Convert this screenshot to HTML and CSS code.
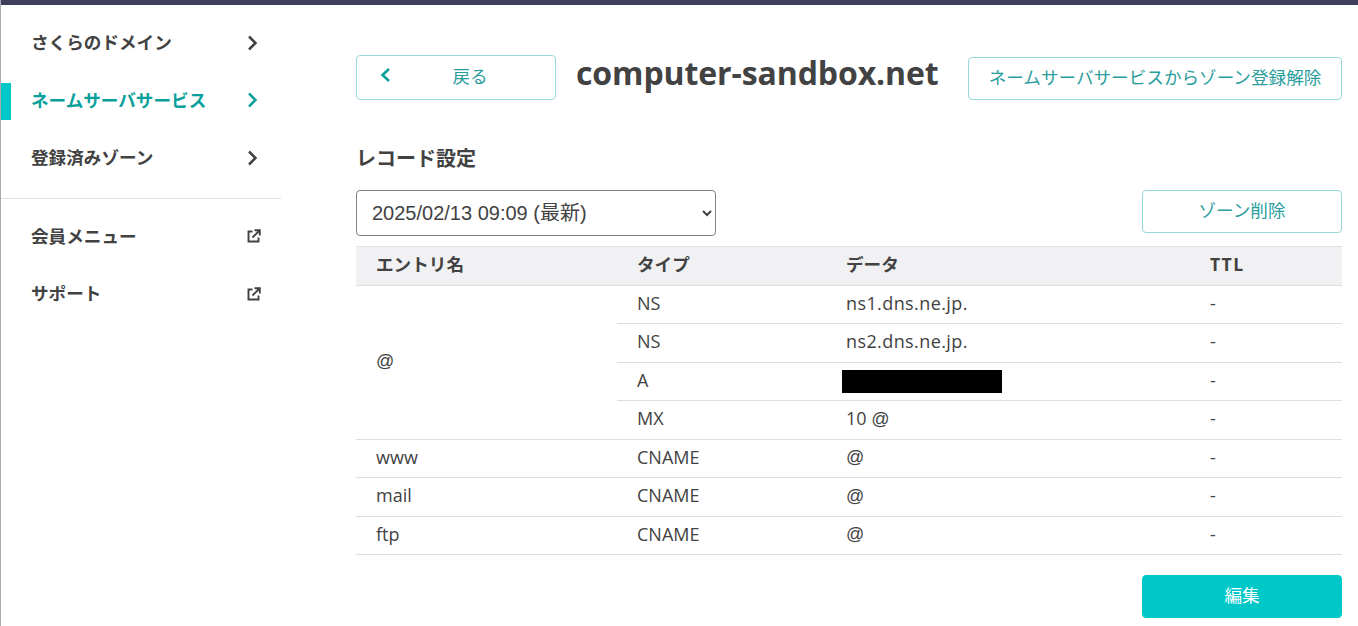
FILE: index.html
```html
<!DOCTYPE html>
<html lang="ja">
<head>
<meta charset="utf-8">
<title>computer-sandbox.net</title>
<link rel="stylesheet" href="styles.css">
</head>
<body>
<div class="topbar"></div>
<div class="layout">
  <nav class="sidebar">
    <ul class="nav-group nav-main">
      <li class="nav-item"><span>さくらのドメイン</span><svg class="chev" viewBox="0 0 12 16"><path d="M2 1.5 L8.5 8 L2 14.5"/></svg></li>
      <li class="nav-item active"><span>ネームサーバサービス</span><svg class="chev" viewBox="0 0 12 16"><path d="M2 1.5 L8.5 8 L2 14.5"/></svg></li>
      <li class="nav-item"><span>登録済みゾーン</span><svg class="chev" viewBox="0 0 12 16"><path d="M2 1.5 L8.5 8 L2 14.5"/></svg></li>
    </ul>
    <ul class="nav-group nav-sub">
      <li class="nav-item"><span>会員メニュー</span><svg class="ext" viewBox="0 0 14 14"><path d="M5.5 2.5 H1.5 V12.5 H11.5 V8.5"/><path d="M5.5 8.5 L12.5 1.5 M7.5 1.2 H12.8 V6.5"/></svg></li>
      <li class="nav-item"><span>サポート</span><svg class="ext" viewBox="0 0 14 14"><path d="M5.5 2.5 H1.5 V12.5 H11.5 V8.5"/><path d="M5.5 8.5 L12.5 1.5 M7.5 1.2 H12.8 V6.5"/></svg></li>
    </ul>
  </nav>
  <main class="content">
    <div class="head-row">
      <button class="btn btn-back"><svg class="back-chev" viewBox="0 0 12 16"><path d="M9 2 L2.5 8 L9 14"/></svg><span class="btn-label">戻る</span></button>
      <h1 class="title">computer-sandbox.net</h1>
      <button class="btn btn-remove"><span class="btn-label">ネームサーバサービスからゾーン登録解除</span></button>
    </div>
    <h2 class="section">レコード設定</h2>
    <div class="tool-row">
      <select class="version"><option>2025/02/13 09:09 (最新)</option></select>
      <button class="btn btn-delete"><span class="btn-label">ゾーン削除</span></button>
    </div>
    <table class="records">
      <thead>
        <tr><th class="c-name">エントリ名</th><th class="c-type">タイプ</th><th class="c-data">データ</th><th class="c-ttl">TTL</th></tr>
      </thead>
      <tbody>
        <tr><td rowspan="4"><span class="at">@</span></td><td>NS</td><td class="host">ns1.dns.ne.jp.</td><td>-</td></tr>
        <tr><td>NS</td><td class="host">ns2.dns.ne.jp.</td><td>-</td></tr>
        <tr><td>A</td><td><span class="redact"></span></td><td>-</td></tr>
        <tr><td>MX</td><td>10 <span class="at">@</span></td><td>-</td></tr>
        <tr><td>www</td><td>CNAME</td><td><span class="at">@</span></td><td>-</td></tr>
        <tr><td>mail</td><td>CNAME</td><td><span class="at">@</span></td><td>-</td></tr>
        <tr><td>ftp</td><td>CNAME</td><td><span class="at">@</span></td><td>-</td></tr>
      </tbody>
    </table>
    <div class="foot-row"><button class="btn btn-edit"><span class="btn-label">編集</span></button></div>
  </main>
</div>
</body>
</html>
```
FILE: styles.css
```css
* { box-sizing: border-box; }
html, body { margin: 0; padding: 0; height: 100%; overflow: hidden; }
body {
  font-family: "Open Sans", "Noto Sans CJK JP", sans-serif;
  color: #424242;
  background: #fff;
  font-size: 17.6px;
  border-left: 1px solid #a9a9b4;
}
.topbar { height: 5px; background: #3f3f5c; margin-left: -1px; }
.layout { display: flex; }
.sidebar { width: 280px; flex: none; }
.nav-group { list-style: none; margin: 0; padding: 0; }
.nav-main { padding-top: 9px; padding-bottom: 11px; border-bottom: 1px solid #e2e2e4; }
.nav-sub { padding-top: 9px; }
.nav-item {
  display: flex;
  align-items: center;
  justify-content: space-between;
  height: 57.5px;
  padding: 0 19px 0 30px;
  font-weight: 700;
  font-size: 17.6px;
  position: relative;
}
.nav-item span { line-height: 24px; padding-bottom: 1px; }
.nav-item.active { color: #0a9f9b; }
.nav-item.active::before {
  content: "";
  position: absolute;
  left: 0; top: 11.5px;
  width: 10px; height: 37px;
  background: #00c8c8;
}
.chev { width: 12px; height: 16px; fill: none; stroke: #424242; stroke-width: 2.5; }
.active .chev { stroke: #0a9f9b; }
.nav-main .chev { margin-right: 3px; }
.ext { width: 14px; height: 14px; fill: none; stroke: #424242; stroke-width: 1.9; margin-right: 1px; }
.content { width: 986px; margin-left: 75px; flex: none; }
.head-row { display: flex; align-items: flex-start; padding-top: 50px; }
.btn {
  font-family: inherit;
  font-size: 17.6px;
  background: #fff;
  color: #2a9d9d;
  border: 1px solid #96d9dc;
  border-radius: 4px;
  padding: 0;
  display: flex;
  align-items: center;
  justify-content: center;
}
.btn-label { line-height: 24px; padding-bottom: 3px; }
.btn-back { width: 200px; height: 45px; position: relative; padding-left: 28px; }
.back-chev {
  position: absolute;
  left: 23px; top: 11px;
  width: 12px; height: 16px;
  fill: none; stroke: #0a9f9b; stroke-width: 2.6;
}
.btn-remove { width: 374px; height: 43px; margin-left: auto; margin-top: 2px; }
.title {
  margin: 0 0 0 20px;
  font-size: 32px;
  font-weight: 700;
  line-height: 35px;
  letter-spacing: -0.1px;
  color: #424242;
}
.section {
  margin: 44px 0 0;
  font-size: 20px;
  font-weight: 700;
  line-height: 30px;
}
.tool-row { display: flex; justify-content: space-between; align-items: flex-start; margin-top: 16px; }
.version {
  width: 360px;
  height: 46px;
  font-family: "Liberation Sans", "Noto Sans CJK JP", sans-serif;
  font-size: 20px;
  color: #424242;
  background: #fff;
  border: 1px solid #80808a;
  border-radius: 4px;
  padding: 0 11px;
}
.btn-delete { width: 200px; height: 43px; }
.records {
  width: 986px;
  margin-top: 10px;
  border-collapse: collapse;
  table-layout: fixed;
  font-size: 18px;
  line-height: 24px;
}
.records th, .records td {
  text-align: left;
  padding: 0 0 3px 20px;
  border-bottom: 1px solid #dedee0;
  font-weight: 400;
  height: 38.5px;
}
.records th {
  background: #f1f1f3;
  font-weight: 700;
  font-size: 17.6px;
  padding-bottom: 4px;
  border-top: 1px solid #e2e2e4;
}
.records .c-ttl { letter-spacing: 1.4px; }
.c-name { width: 261px; }
.c-type { width: 209px; }
.c-data { width: 364px; }
.host { letter-spacing: 0.4px; }
.at { font-family: "Liberation Sans", sans-serif; }
.records td:has(.redact) { padding-bottom: 0; }
.redact { display: block; width: 160px; height: 23px; background: #000; margin-left: -4px; }
.foot-row { display: flex; justify-content: flex-end; margin-top: 20px; }
.btn-edit { width: 200px; height: 43px; background: #00c8c8; border-color: #00c8c8; color: #fff; }
```
